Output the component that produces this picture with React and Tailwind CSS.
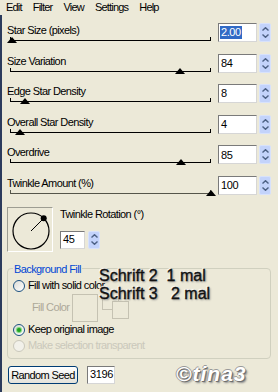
import React from 'react';

const font = "font-['Liberation_Sans',Arial,sans-serif]";

const rows = [
    { label: 'Star Size (pixels)', value: '2.00', thumb: 2, selected: true },
    { label: 'Size Variation', value: '84', thumb: 170 },
    { label: 'Edge Star Density', value: '8', thumb: 15 },
    { label: 'Overall Star Density', value: '4', thumb: 10 },
    { label: 'Overdrive', value: '85', thumb: 171 },
    { label: 'Twinkle Amount (%)', value: '100', thumb: 201, dim: true },
];

const Spinner = () => (
    <div className="flex h-full w-[12px] flex-col items-center justify-center gap-[3px] rounded-[2px] border border-[#d8e2fb] bg-[#c3d3fb]">
        <svg width="7" height="4" viewBox="0 0 7 4">
            <path d="M0.5 3.5 L3.5 0.7 L6.5 3.5" stroke="#4d6185" strokeWidth="1.4" fill="none" />
        </svg>
        <svg width="7" height="4" viewBox="0 0 7 4">
            <path d="M0.5 0.5 L3.5 3.3 L6.5 0.5" stroke="#4d6185" strokeWidth="1.4" fill="none" />
        </svg>
    </div>
);

const Field = ({ value, selected, width }) => (
    <div className={`flex h-full ${width} items-center border border-[#7a7a7a] border-r-[#d6d6d6] border-b-[#d6d6d6] bg-white pl-[1px] text-[11px] tracking-[-0.4px] text-black`}>
        {selected ? <span className="bg-[#316ac5] px-[1px] leading-[13px] text-white">{value}</span> : <span className="px-[1px]">{value}</span>}
    </div>
);

const Radio = ({ checked, disabled }) => (
    <div className={`flex h-[12px] w-[12px] items-center justify-center rounded-full border ${disabled ? 'border-[#cac8bb] bg-[#f2f1ea]' : 'border-[#1c5180] bg-gradient-to-br from-[#dcdcd6] to-white'}`}>
        {checked && <div className="h-[4px] w-[4px] rounded-full bg-[#21a121] shadow-[0_0_1px_1px_#6fd66f]" />}
    </div>
);

const SliderRow = ({ row }) => (
    <div className="flex h-[30.6px] items-start pl-[5px]">
        <div className="w-[205px]">
            <div className="h-[14px] leading-[14px]">{row.label}</div>
            <div className="relative ml-[3px] h-[6px] w-[201px]">
                <div className={`absolute top-0 left-0 h-[4px] w-full border border-t-0 ${row.dim ? 'border-[#55554a]' : 'border-black'}`} />
                <div
                    className="absolute top-0 h-0 w-0 border-r-[5px] border-b-[6px] border-l-[5px] border-r-transparent border-b-black border-l-transparent"
                    style={{ left: row.thumb - 5 }}
                />
            </div>
        </div>
        <div className="ml-[6px] flex h-[19px] gap-[2px]">
            <Field value={row.value} selected={row.selected} width="w-[39px]" />
            <Spinner />
        </div>
    </div>
);

const App = () => {
    return (
        <div className={`relative h-[392px] w-[278px] overflow-hidden bg-[#ece9d8] text-[11px] tracking-[-0.6px] text-black ${font}`}>
            {/* Menu */}
            <div className="flex h-[15px] gap-[11px] pl-[6px] leading-[15px] tracking-[-0.8px]">
                <span>Edit</span>
                <span>Filter</span>
                <span>View</span>
                <span>Settings</span>
                <span>Help</span>
            </div>

            <div className="h-[377px] border-l-2 border-[#2c3b5c] pt-[8px]">
                {rows.map((row) => (
                    <SliderRow key={row.label} row={row} />
                ))}

                {/* Twinkle Rotation */}
                <div className="flex pl-[5px]">
                    <div className="h-[45px] w-[46px] border border-[#9d9d92] border-r-white border-b-white">
                        <svg width="44" height="43" viewBox="0 0 44 43">
                            <circle cx="23" cy="23" r="18" stroke="black" strokeWidth="1.2" fill="none" />
                            <line x1="23" y1="23" x2="35.7" y2="10.3" stroke="black" strokeWidth="1" />
                            <circle cx="35.7" cy="10.3" r="3" fill="black" />
                        </svg>
                    </div>
                    <div className="ml-[7px]">
                        <div className="h-[14px] leading-[14px]">Twinkle Rotation (°)</div>
                        <div className="mt-[10px] flex h-[18px] gap-[3px]">
                            <Field value="45" width="w-[25px]" />
                            <Spinner />
                        </div>
                    </div>
                </div>

                {/* Background Fill */}
                <fieldset className="mt-[10px] ml-[5px] h-[97px] w-[264px] rounded-[4px] border border-[#d0d0bf] px-[5px] pt-[3px]">
                    <legend className="px-[1px] leading-[14px] text-[#0046d5]">Background Fill</legend>
                    <div className="flex h-[14px] items-center gap-[3px]">
                        <Radio />
                        <span>Fill with solid color</span>
                    </div>
                    <div className="flex h-[30px] items-center pl-[19px]">
                        <span className="w-[40px] text-[#aca899]">Fill Color</span>
                        <div className="h-[28px] w-[26px] border border-[#c5c2b2] bg-[#ece9d8]" />
                        <svg className="ml-[4px]" width="28" height="23" viewBox="0 0 28 23">
                            <rect x="0.5" y="0.5" width="16" height="13" fill="#ece9d8" stroke="#c5c2b2" />
                            <rect x="10.5" y="5.5" width="16" height="17" fill="#ece9d8" stroke="#c5c2b2" />
                        </svg>
                    </div>
                    <div className="flex h-[14px] items-center gap-[3px]">
                        <Radio checked />
                        <span>Keep original image</span>
                    </div>
                    <div className="mt-[2px] flex h-[14px] items-center gap-[3px]">
                        <Radio disabled />
                        <span className="text-[#cac8bb]">Make selection transparent</span>
                    </div>
                </fieldset>

                {/* Random Seed */}
                <div className="mt-[7px] flex h-[18px] pl-[6px]">
                    <button className="h-full w-[70px] rounded-[3px] border border-[#003c74] bg-gradient-to-b from-white to-[#e3e2da] leading-[16px]">
                        Random Seed
                    </button>
                    <div className="ml-[9px] h-full">
                        <Field value="3196" width="w-[28px]" />
                    </div>
                </div>
            </div>

            {/* Overlaid notes */}
            <div className="absolute top-[267px] left-[99px] font-['Liberation_Sans',Arial,sans-serif] text-[16px] leading-[18px] tracking-normal whitespace-pre text-[#111] [-webkit-text-stroke:0.35px_#111] [text-shadow:1px_1px_2px_#808080,-1px_-1px_1px_#ffffff]">
                <div>Schrift 2  1 mal</div>
                <div>Schrift 3   2 mal</div>
            </div>
            <div className="absolute top-[362px] left-[176px] text-[21px] font-bold italic leading-[24px] tracking-[1px] text-white [text-shadow:1px_1px_0_#6e6e6e,-1px_0_0_#9a9a9a,0_-1px_0_#9a9a9a,2px_2px_2px_#8a8a8a]">
                ©tina3
            </div>
        </div>
    );
};

export default App;
